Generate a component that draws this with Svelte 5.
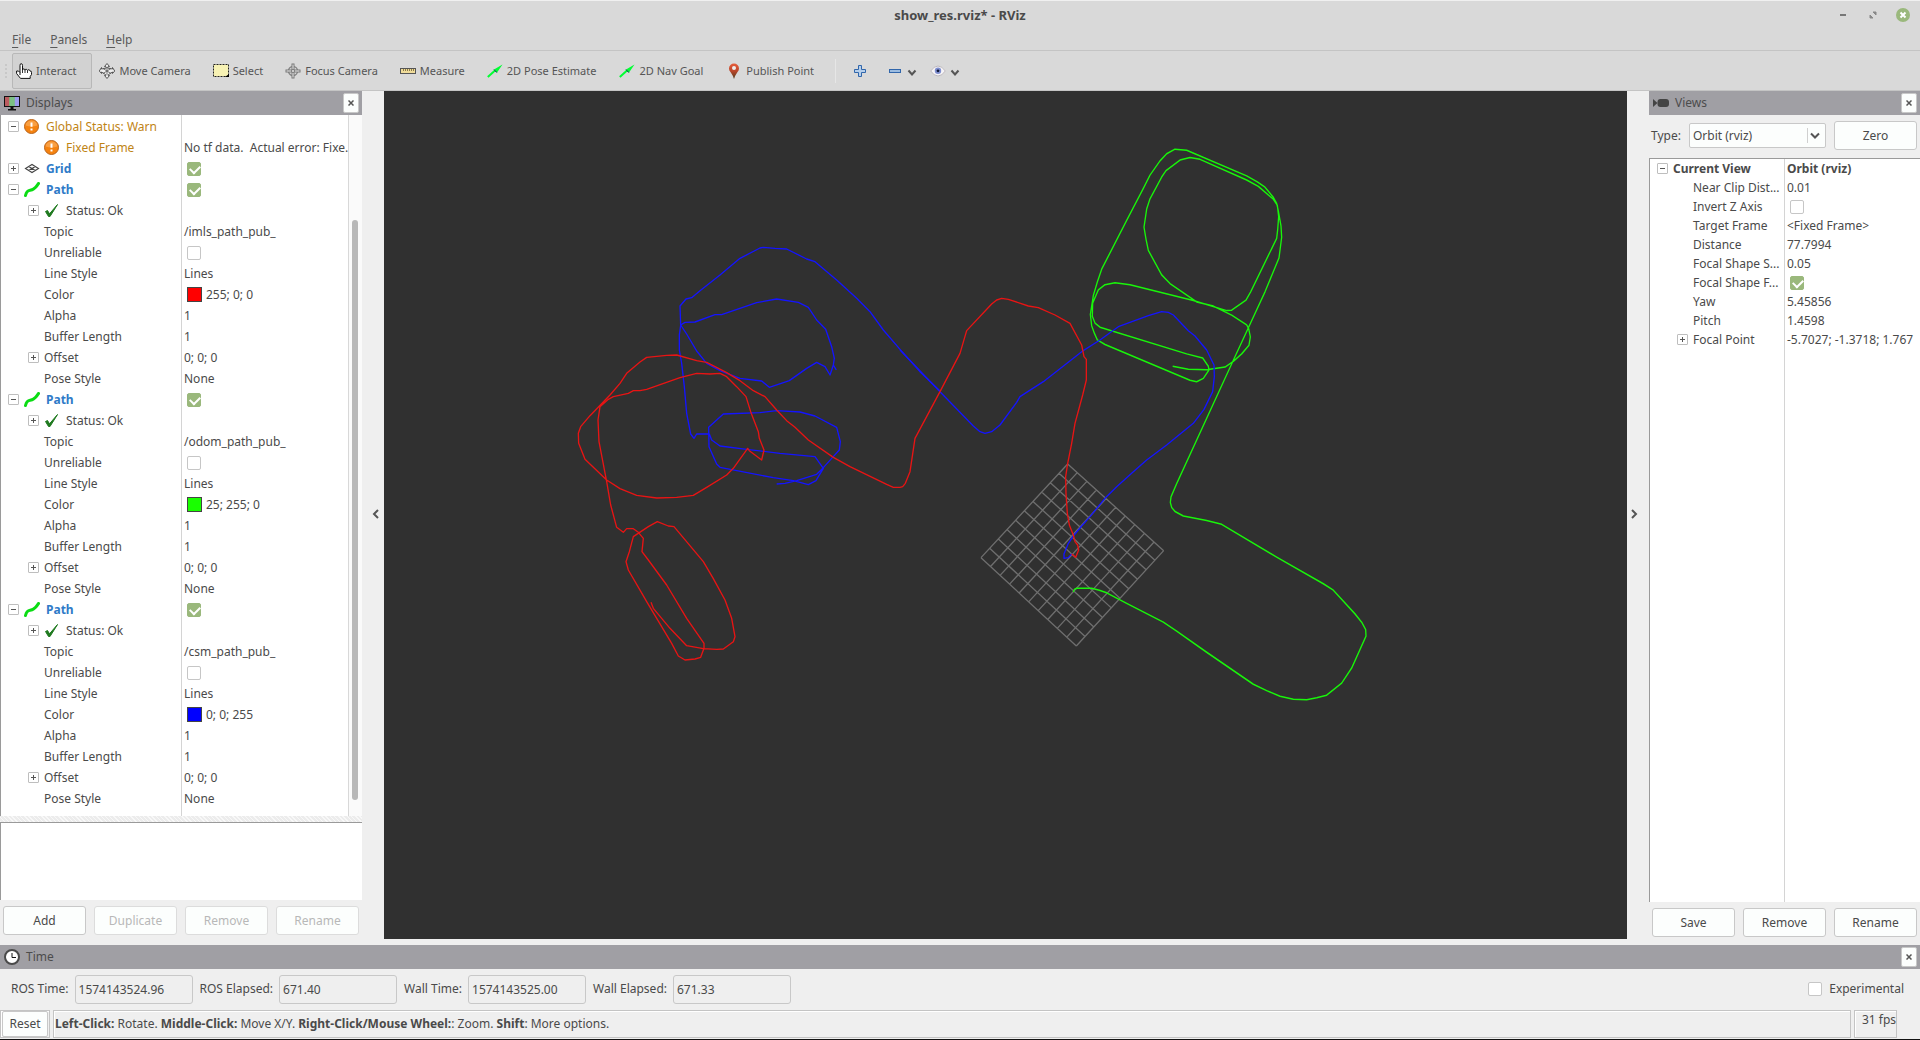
<script>
  const tools = [
    { id: 'interact', label: 'Interact', active: true },
    { id: 'move', label: 'Move Camera' },
    { id: 'select', label: 'Select' },
    { id: 'focus', label: 'Focus Camera' },
    { id: 'measure', label: 'Measure' },
    { id: 'arrow', label: '2D Pose Estimate' },
    { id: 'arrow', label: '2D Nav Goal' },
    { id: 'pin', label: 'Publish Point' },
  ];

  function pathRows(topic, color, colorText) {
    return [
      { name: 'Path', level: 0, toggle: '-', icon: 'path', tone: 'display', check: true },
      { name: 'Status: Ok', level: 1, toggle: '+', icon: 'ok' },
      { name: 'Topic', level: 1, value: topic },
      { name: 'Unreliable', level: 1, check: false },
      { name: 'Line Style', level: 1, value: 'Lines' },
      { name: 'Color', level: 1, value: colorText, swatch: color },
      { name: 'Alpha', level: 1, value: '1' },
      { name: 'Buffer Length', level: 1, value: '1' },
      { name: 'Offset', level: 1, toggle: '+', value: '0; 0; 0' },
      { name: 'Pose Style', level: 1, value: 'None' },
    ];
  }

  const displays = [
    { name: 'Global Status: Warn', level: 0, toggle: '-', icon: 'warn', tone: 'warning' },
    { name: 'Fixed Frame', level: 1, icon: 'warn', tone: 'warning', value: 'No tf data.  Actual error: Fixe.' },
    { name: 'Grid', level: 0, toggle: '+', icon: 'grid', tone: 'display', check: true },
    ...pathRows('/imls_path_pub_', '#ff0000', '255; 0; 0'),
    ...pathRows('/odom_path_pub_', '#19ff00', '25; 255; 0'),
    ...pathRows('/csm_path_pub_', '#0000ff', '0; 0; 255'),
  ];

  const views = [
    { name: 'Current View', level: 0, toggle: '-', tone: 'strong', value: 'Orbit (rviz)' },
    { name: 'Near Clip Dist...', level: 1, value: '0.01' },
    { name: 'Invert Z Axis', level: 1, check: false },
    { name: 'Target Frame', level: 1, value: '<Fixed Frame>' },
    { name: 'Distance', level: 1, value: '77.7994' },
    { name: 'Focal Shape S...', level: 1, value: '0.05' },
    { name: 'Focal Shape F...', level: 1, check: true },
    { name: 'Yaw', level: 1, value: '5.45856' },
    { name: 'Pitch', level: 1, value: '1.4598' },
    { name: 'Focal Point', level: 1, toggle: '+', value: '-5.7027; -1.3718; 1.767' },
  ];

  const clocks = [
    { id: 'ros-time', label: 'ROS Time:', value: '1574143524.96' },
    { id: 'ros-elapsed', label: 'ROS Elapsed:', value: '671.40' },
    { id: 'wall-time', label: 'Wall Time:', value: '1574143525.00' },
    { id: 'wall-elapsed', label: 'Wall Elapsed:', value: '671.33' },
  ];

  // Ground grid: ten by ten cells spread between four projected corners.
  const top = [2051, 1119], left = [1791, 1400], right = [2339, 1379], bottom = [2077, 1665];
  const mix = (a, b, t) => [a[0] + (b[0] - a[0]) * t, a[1] + (b[1] - a[1]) * t];
  const gridLines = [];
  for (let i = 0; i <= 10; i++) {
    gridLines.push([mix(top, right, i / 10), mix(left, bottom, i / 10)]);
    gridLines.push([mix(top, left, i / 10), mix(right, bottom, i / 10)]);
  }
  const gridPath = gridLines.map(([a, b]) => `M${a.join(' ')}L${b.join(' ')}`).join('');

  const traces = [
    { kind: 'green', place: 'translate(2028 117) scale(1 1.1288)', points: '40,1228 43,1221 50,1218 95,1218 118,1223 140,1230 200,1258 310,1308 350,1332 440,1388 580,1473 620,1490 660,1505 700,1513 740,1514 770,1509 800,1502 845,1470 875,1430 918,1345 917,1328 905,1308 885,1286 820,1223 790,1206 650,1135 485,1048 440,1038 370,1026 345,1014 335,1003 331,990 333,975 350,940 520,612 615,430 657,340 665,285 663,255 655,215 650,195 640,179 615,152 592,138 560,122 380,54 345,51 320,63 300,82 270,120 250,155 200,240 125,370 112,404 100,440 91,490 95,520 103,540 112,558 135,570 390,665 410,669 430,660 447,638 445,628 428,606 380,595 120,524 105,513 97,495 98,460 115,425 135,411 165,406 210,411 400,453 500,480 515,479 558,452 572,430 650,288 653,265 656,230 652,200 640,184 595,150 560,133 420,78 390,73 360,80 318,108 305,125 270,183 260,210 252,258 258,290 265,320 305,385 330,408 410,457 460,468 515,492 560,518 566,528 571,550 567,572 545,595 520,615 495,630 440,637 385,636 338,628' },
    { kind: 'blue', place: 'translate(1548 567)', points: '515,822 505,833 492,835 492,822 505,790 520,768 545,738 570,710 615,655 650,620 700,575 740,540 800,495 880,430 912,388 938,335 943,290 942,255 920,210 885,168 865,152 820,105 805,97 785,95 745,107 655,140 600,180 545,215 430,305 360,350 350,367 300,435 275,455 255,460 240,455 220,438 120,335 0,210' },
    { kind: 'blue', place: 'translate(528 417)', points: '1140,483 1080,425 1020,358 970,300 930,245 890,205 830,150 765,95 740,87 680,57 645,55 610,52 600,54 540,85 480,135 420,182 395,203 378,207 360,228 362,285 358,315 358,360 365,400 373,470 380,550 392,612 402,625 410,612 448,612 455,630 480,648 560,658 660,670 765,680 790,715 768,752 745,764 700,752 640,743 480,712 470,702 447,650 446,592 490,552 600,548 650,542 720,546 765,558 830,592 841,635 838,660 815,685 790,713 770,733 710,752 675,760 650,762' },
    { kind: 'blue', place: 'translate(528 417)', points: '362,285 375,277 405,276 465,254 485,254 590,218 650,207 715,217 745,232 770,270 797,298 815,350 823,385 820,405 828,418 820,405 810,435 795,410 770,397 740,415 688,452 628,472 605,453 540,445 480,422 440,400 410,363 380,312 362,285' },
    { kind: 'red', place: 'translate(1548 567)', points: '515,822 527,832 536,810 533,795 525,785 520,765 508,735 502,700 498,640 497,590 503,550 515,490 525,430 548,345 559,300 559,238 552,230 545,195 510,130 465,105 415,83 385,78 325,58 305,55 290,60 275,72 200,152 180,220 120,335 45,475 30,575 16,610 8,620 0,622' },
    { kind: 'red', place: 'translate(528 417)', points: '1020,772 1000,772 980,763 870,710 820,682 745,630 705,592 680,572 650,540 615,500 580,482 540,452 500,428 440,397 410,392 350,375 320,376 260,382 240,396 200,430 180,460 150,495 90,557 62,590 55,610 56,640 75,688 140,750 180,776 230,796 290,804 350,802 400,796 440,772 500,735 520,715 563,655 568,662 605,690 612,660 598,625 595,605 572,545 558,500 530,470 500,440 480,430 450,432 410,430 360,443 260,478 240,482 220,482 205,490 160,500 145,508 120,530 114,570 117,635 140,755 152,825 170,892 190,907 200,896 220,896 235,907 250,925 246,965 265,990 320,1065 380,1165 432,1240 432,1255 422,1282 405,1287 375,1290 355,1278 335,1240 260,1115 205,1020 198,995 208,965 220,920 238,908 265,890 292,875 325,888 342,890 430,995 460,1046 495,1110 515,1165 525,1220 520,1235 490,1257 470,1258 430,1256 380,1247 330,1195 280,1135 273,1117' },
  ];
</script>

{#snippet icon(id)}
  <svg class="icon" width="16" height="16" viewBox="0 0 16 16" aria-hidden="true">
    {#if id === 'interact'}
      <path d="M4 12V2.5Q4 .6 5.2.6T6.500 2.500V7Q6.700 5.700 7.800 5.900T9 7.200Q9.300 6 10.300 6.300T11.500 7.500Q12 6.500 13 6.800T14.200 8.200Q15.500 7.700 15.500 9.300V11.500L14.200 13.500V15.400H4.500L.6 10.500V8H2.500L4 9.500" fill="#fff" stroke="#111" stroke-width="1" />
      <path d="M6.500 7v3M9 7v3M11.500 7.500V10" stroke="#333" />
    {:else if id === 'move'}
      <path d="M8 .5l2.500 3H9.200L8.600 5 13.500 6V4.500L15.700 8l-2.200 2.500V9L9.500 11.500 9.200 12.500h1.300L8 15.500l-2.500-3h1.300L6.500 11.500 2.500 9v1.500L.3 8l2.200-3.500V6L7.400 5 6.800 3.500H5.500z" fill="#eee" stroke="#555" />
      <path d="M4 5.500l8 5M12 5.500l-8 5M8 4v8" stroke="#555" stroke-width=".8" />
    {:else if id === 'select'}
      <rect x="0.500" y="1.500" width="15" height="12" fill="#f7f2b4" stroke="#222" stroke-dasharray="2 1" />
      <path d="M16 14h-4l4-3z" fill="#000" />
    {:else if id === 'focus'}
      <circle cx="8" cy="8" r="4.500" fill="#ddd" stroke="#888" stroke-width="1.500" />
      <path d="M8 .5v15M.5 8h15" stroke="#777" stroke-width="3" />
      <path d="M8 1.500v13M1.500 8h13" stroke="#eee" />
      <circle cx="8" cy="8" r="1.500" fill="#eee" stroke="#777" />
    {:else if id === 'measure'}
      <rect x=".5" y="5.500" width="15" height="5" fill="#f0dc9a" stroke="#555" />
      <path d="M3.500 6v2M5.500 6v2M7.500 6v2M9.500 6v2M11.500 6v2M13.500 6v2" stroke="#8a7a48" />
    {:else if id === 'arrow'}
      <path d="M.8 14L8 7.500" stroke="#0f3" stroke-width="2" />
      <path d="M15.500 1.500L7 6.500 10 9.500z" fill="#0f3" />
      <path d="M7 6.500L10 9.500 8.200 8.200z" fill="#065" stroke="#064" stroke-width=".6" />
    {:else if id === 'pin'}
      <path d="M8 16Q7 12.500 4.500 9A5 5 0 1 1 11.500 9Q9 12.500 8 16z" fill="url(#pin-fill)" />
      <circle cx="8" cy="5" r="2" fill="#eee" />
    {:else if id === 'plus'}
      <path d="M6.500 2.500h3v4h4v3h-4v4h-3v-4h-4v-3h4z" fill="#b5cfec" stroke="#3166ab" />
    {:else if id === 'minus'}
      <rect x="2.500" y="6.500" width="11" height="3" fill="#9cbce0" stroke="#3166ab" />
    {:else if id === 'eye'}
      <path d="M.7 8Q4 3 8 3t7.300 5Q12 13 8 13T.7 8z" fill="#f6f4f6" stroke="#bdb8bd" />
      <circle cx="8" cy="7.800" r="3.200" fill="#7f8fd0" />
      <circle cx="8" cy="7.800" r="1.400" fill="#101838" />
    {:else if id === 'warn'}
      <circle cx="7.500" cy="7.500" r="7" fill="#f5820f" stroke="#b8641c" />
      <path d="M1.500 6.500a6 5 0 0 1 12 0Q7.500 8.500 1.500 6.500z" fill="#fbab58" opacity=".7" />
      <path d="M7.500 3.500v4.200M7.500 9.500v2" stroke="#fff" stroke-width="2" />
    {:else if id === 'grid'}
      <path d="M1.500 7.500L8 3.500 14.500 7.500 8 11.500zM4.700 5.500l6.600 4M11.300 5.500l-6.600 4" fill="none" stroke="#444" stroke-width="1.100" />
    {:else if id === 'path'}
      <path d="M1.500 13.500C3 6.500 6 9.500 9.500 7S12.500 4 14.500 1.500" fill="none" stroke="#0bdc14" stroke-width="3" stroke-linecap="round" />
    {:else if id === 'ok'}
      <path d="M1.500 8.500L3.500 7.500 5.500 10.800 13.500 1.500 6 13.500H4.500z" fill="#1f7a1f" stroke="#1f7a1f" />
    {:else if id === 'monitor'}
      <rect x=".5" y="1.500" width="15" height="10" fill="#69c26e" stroke="#111" />
      <path d="M1 2h4.500v9H1z" fill="#bb5c60" /><path d="M10.500 2H15v9h-4.500z" fill="#9d9cee" />
      <path d="M5.500 2H10.500v9h-5z" fill="#7cc184" />
      <path d="M6.500 12h3v2h2.500v1.500H4V14h2.500z" fill="#111" />
    {:else if id === 'camera'}
      <path d="M0 4l4.500 4L0 12z" fill="#444" />
      <rect x="4.500" y="4" width="11.500" height="8" rx="3" fill="#444" />
    {:else if id === 'clock'}
      <circle cx="8" cy="8" r="7" fill="#fff" stroke="#4a4a4a" stroke-width="2" />
      <path d="M8 4v4.500h4" fill="none" stroke="#111" />
    {/if}
  </svg>
{/snippet}

{#snippet chevron(d)}
  <svg class="chevron" width="10" height="10" viewBox="0 0 10 10" aria-hidden="true"><path {d} fill="none" stroke="#555" stroke-width="2" /></svg>
{/snippet}

{#snippet cross()}
  <svg width="6" height="6" viewBox="0 0 6 6" aria-hidden="true"><path d="M.5.5l5 5M5.500.5l-5 5" stroke="#555" stroke-width="1.500" /></svg>
{/snippet}

{#snippet tree(rows, label, kind)}
  <table class="tree {kind}" aria-label={label}>
    <colgroup><col class="names" /><col /></colgroup>
    <tbody>
      {#each rows as row}
        <tr class={row.tone}>
          <td>
            <div class="name level{row.level}">
              {#if row.toggle}
                <button class="toggle" class:plus={row.toggle === '+'} aria-label="Toggle {row.name}"></button>
              {:else}
                <span class="spacer"></span>
              {/if}
              {#if row.icon}{@render icon(row.icon)}{/if}
              <span>{row.name}</span>
            </div>
          </td>
          <td>
            <div class="value">
              {#if row.check !== undefined}
                <input type="checkbox" checked={row.check} aria-label={row.name} />
              {/if}
              {#if row.swatch}<span class="swatch" style:background={row.swatch}></span>{/if}
              {#if row.value}<span>{row.value}</span>{/if}
            </div>
          </td>
        </tr>
      {/each}
    </tbody>
  </table>
{/snippet}

<svg class="defs" width="0" height="0" aria-hidden="true">
  <linearGradient id="pin-fill" x1="0" y1="0" x2="0" y2="1">
    <stop offset="0" stop-color="#e85e3c" /><stop offset=".5" stop-color="#b8452a" /><stop offset="1" stop-color="#4d3c1c" />
  </linearGradient>
</svg>

<div class="window">
  <header class="titlebar">
    <h1>show_res.rviz* - RViz</h1>
    <div class="controls">
      <button aria-label="Minimize"><svg width="14" height="14" viewBox="0 0 14 14"><path d="M4 7h6" stroke="#777" stroke-width="2" /></svg></button>
      <button aria-label="Maximize"><svg width="14" height="14" viewBox="0 0 14 14"><path d="M7 4h3v3zM4 7v3h3z" fill="#888" stroke="#888" /></svg></button>
      <button aria-label="Close"><svg width="14" height="14" viewBox="0 0 14 14"><circle cx="7" cy="7" r="7" fill="#9ab87c" /><path d="M4.500 4.500l5 5M9.500 4.500l-5 5" stroke="#fff" stroke-width="2" /></svg></button>
    </div>
  </header>

  <nav class="menubar">
    <button><u>F</u>ile</button>
    <button><u>P</u>anels</button>
    <button><u>H</u>elp</button>
  </nav>

  <div class="toolbar">
    <span class="handle"></span>
    {#each tools as tool}
      <button class="tool {tool.id}" class:active={tool.active}>{@render icon(tool.id)}{tool.label}</button>
    {/each}
    <span class="separator"></span>
    <button class="mini" aria-label="Add tool">{@render icon('plus')}</button>
    <button class="mini" aria-label="Remove tool">{@render icon('minus')}{@render chevron('M1.500 4.500L5 8.500 8.500 4.500')}</button>
    <button class="mini" aria-label="Tool options">{@render icon('eye')}{@render chevron('M1.500 4.500L5 8.500 8.500 4.500')}</button>
  </div>

  <main>
    <section class="panel displays">
      <h2>{@render icon('monitor')}<span>Displays</span><button class="close" aria-label="Close Displays">{@render cross()}</button></h2>
      <div class="scroller">
        <div class="treebox displaybox">{@render tree(displays, 'Displays', 'tall')}</div>
        <div class="track"><div class="thumb"></div></div>
      </div>
      <div class="splitter"></div>
      <div class="help"></div>
      <div class="buttons">
        <button class="push">Add</button>
        <button class="push" disabled>Duplicate</button>
        <button class="push" disabled>Remove</button>
        <button class="push" disabled>Rename</button>
      </div>
    </section>

    <button class="fold fold-left" aria-label="Hide left panel">{@render chevron('M7 1L3 5L7 9')}</button>

    <div class="viewport">
      <svg class="scene" viewBox="0 0 3729 2544" role="img" aria-label="3D view">
        <path class="ground" d={gridPath} />
        {#each traces as trace}
          <polyline class="trace {trace.kind}" transform={trace.place} points={trace.points} />
        {/each}
      </svg>
    </div>

    <button class="fold fold-right" aria-label="Hide right panel">{@render chevron('M3 1L7 5L3 9')}</button>

    <section class="panel views">
      <h2>{@render icon('camera')}<span>Views</span><button class="close" aria-label="Close Views">{@render cross()}</button></h2>
      <div class="type">
        <label for="view-type">Type:</label>
        <div class="combo">
          <select id="view-type"><option>Orbit (rviz)</option></select>
          <svg width="10" height="8" viewBox="0 0 10 8" aria-hidden="true"><path d="M1 1.500l4 4 4-4" fill="none" stroke="#555" stroke-width="2" /></svg>
        </div>
        <button class="push">Zero</button>
      </div>
      <div class="treebox viewbox">{@render tree(views, 'Views', 'short')}</div>
      <div class="buttons">
        <button class="push">Save</button>
        <button class="push">Remove</button>
        <button class="push">Rename</button>
      </div>
    </section>
  </main>

  <section class="time">
    <h2>{@render icon('clock')}<span>Time</span><button class="close" aria-label="Close Time">{@render cross()}</button></h2>
    <div class="clocks">
      {#each clocks as clock}
        <label for={clock.id}>{clock.label}</label>
        <input id={clock.id} type="text" readonly value={clock.value} />
      {/each}
      <label class="experimental"><input type="checkbox" />Experimental</label>
    </div>
  </section>

  <footer>
    <div class="frame"><button class="reset">Reset</button></div>
    <p class="frame hint"><b>Left-Click:</b> Rotate. <b>Middle-Click:</b> Move X/Y. <b>Right-Click/Mouse Wheel:</b>: Zoom. <b>Shift</b>: More options.</p>
    <div class="frame fps">31 fps</div>
  </footer>
</div>

<style>
  :global(body) { margin: 0; }
  * { box-sizing: border-box; }
  .window {
    display: flex;
    flex-direction: column;
    min-height: 100vh;
    background: #efefef;
    color: #4a4a4a;
    font: 12px/18px "Noto Sans", sans-serif;
    border-bottom: 1px solid #111;
  }
  button, input, select { font: inherit; color: inherit; margin: 0; }
  button { border: 0; background: none; padding: 0; }
  h1, h2, p { margin: 0; font-size: inherit; }
  svg { display: block; flex: none; }
  .defs { position: absolute; }

  .titlebar {
    display: grid;
    grid-template-columns: 1fr auto 1fr;
    align-items: center;
    height: 28px;
    background: #d9d9d9;
    border-top: 1px solid #f0f0f0;
  }
  .titlebar h1 { grid-column: 2; font-size: 13px; font-weight: 700; }
  .controls { display: flex; justify-content: flex-end; align-items: center; gap: 16px; padding-right: 10px; }
  .menubar { display: flex; gap: 19px; padding: 2px 12px 0; height: 23px; background: #d9d9d9; border-bottom: 1px solid #c4c4c4; color: #5a5a5a; }
  .menubar u { text-underline-offset: 3px; }

  .toolbar {
    display: flex;
    align-items: center;
    gap: 2px;
    height: 40px;
    padding-left: 5px;
    background: #d9d9d9;
    border-bottom: 1px solid #c4c4c4;
    font-size: 11px;
    color: #555;
  }
  .handle { width: 5px; height: 14px; border-left: 2px dotted #c8c8c8; }
  .tool { display: flex; align-items: center; gap: 4px; height: 36px; padding: 0 15px 0 3px; border: 1px solid transparent; border-radius: 2px; }
  .tool.active { margin-right: 1px; background: #d2d2d2; border-color: #b8b8b8; }
  .tool.arrow { padding-right: 16px; }
  .separator { width: 1px; height: 24px; margin: 0 14px 0 3px; background: #e6e6e6; }
  .mini { display: flex; align-items: center; gap: 4px; margin-right: 8px; }
  .mini + .mini { margin-left: 9px; margin-right: 2px; }

  main { display: grid; grid-template-columns: 362px 22px 1fr 22px 271px; flex: 1; }
  .panel { display: flex; flex-direction: column; min-width: 0; }
  h2 {
    display: flex;
    align-items: center;
    gap: 6px;
    height: 24px;
    padding: 0 3px 0 4px;
    background: #a09fa4;
    color: #4c4c4c;
    font-weight: 400;
  }
  .close {
    display: flex;
    align-items: center;
    justify-content: center;
    width: 16px;
    height: 20px;
    margin-left: auto;
    background: #fcfefd;
    border: 1px solid #c8c8c8;
    border-radius: 2px;
  }
  .scroller { display: flex; flex: 1; border-left: 1px solid #9a9a9a; background: #fff; }
  .treebox { flex: 1; min-width: 0; background: #fff; }
  .displaybox { padding-top: 1px; background: linear-gradient(#d4d4d4, #d4d4d4) 180px 0 / 1px 100% no-repeat #fff; }
  .viewbox { border: solid #9a9a9a; border-width: 1px 0 0 1px; background: linear-gradient(#d4d4d4, #d4d4d4) 134px 0 / 1px 100% no-repeat #fff; }
  .track { width: 14px; padding: 105px 4px 16px 3px; border-left: 1px solid #d8d8d8; background: #fafafa; }
  .thumb { height: 100%; border-radius: 3px; background: #b8b8b8; }

  .tree { width: 100%; table-layout: fixed; border-collapse: collapse; }
  .tall .names { width: 180px; }
  .short .names { width: 134px; }
  td { padding: 0; }
  .name, .value { display: flex; align-items: center; white-space: pre; }
  .tall .name, .tall .value { height: 21px; }
  .short .name, .short .value { height: 19px; }
  .name { padding-left: 7px; }
  .name.level1 { padding-left: 27px; }
  .name .icon { margin-right: 6px; }
  .toggle, .spacer { flex: none; width: 11px; height: 11px; margin-right: 5px; }
  .toggle {
    border: 1px solid #bebebe;
    border-radius: 1px;
    background: linear-gradient(#555, #555) center / 5px 1px no-repeat #fff;
  }
  .toggle.plus { background: linear-gradient(#555, #555) center / 5px 1px no-repeat, linear-gradient(#555, #555) center / 1px 5px no-repeat #fff; }
  .value { padding-left: 3px; gap: 4px; }
  .swatch { width: 15px; height: 15px; margin-left: 3px; border: 1px solid #444; }
  .warning .name { color: #bf8415; }
  .display .name { color: #2f7bc8; font-weight: 700; }
  .strong { font-weight: 700; }

  input[type='checkbox'] {
    appearance: none;
    display: grid;
    flex: none;
    width: 14px;
    height: 14px;
    background: #fff;
    border: 1px solid #c6c6c6;
    border-radius: 2px;
  }
  td input[type='checkbox'] { margin-left: 3px; }
  input[type='checkbox']:checked { background: #9ab87c; border-color: #9ab87c; }
  input[type='checkbox']:checked::after {
    content: '';
    width: 8px;
    height: 5px;
    margin: 2px;
    border: solid #fff;
    border-width: 0 0 2px 2px;
    transform: rotate(-45deg);
  }

  .splitter { height: 6px; background: repeating-linear-gradient(45deg, #f8f8f8 0 1px, #ececec 1px 3px); }
  .help { height: 78px; background: #fff; border: solid #9a9a9a; border-width: 1px 0 0 1px; }
  .buttons { display: grid; grid-auto-flow: column; grid-auto-columns: 1fr; gap: 8px; padding: 6px 3px 10px; }
  .views .buttons { padding-bottom: 8px; }
  .push { height: 29px; background: #fcfefd; border: 1px solid #c8c8c8; border-radius: 3px; }
  .push:disabled { color: #b8b8b8; border-color: #dcdcdc; }
  .fold { display: flex; align-items: center; justify-content: center; padding-bottom: 8px; }
  .fold-left { padding-left: 6px; }
  .fold-right { padding-right: 8px; }
  .viewport { contain: size; margin-bottom: 6px; background: #303030; }
  .scene { width: 100%; height: 100%; }
  .ground, .trace { fill: none; stroke-width: 4; }
  .ground { stroke: #6e6e6e; }
  .trace { stroke-linejoin: round; }
  .red { stroke: #e81414; }
  .green { stroke: #19f50a; }
  .blue { stroke: #1414ff; }

  .type { display: flex; align-items: center; gap: 8px; padding: 6px 3px 8px 2px; }
  .combo { position: relative; flex: 1; }
  .combo select {
    appearance: none;
    display: block;
    width: 100%;
    height: 25px;
    padding: 0 3px;
    border: 1px solid #c8c8c8;
    border-radius: 2px;
    background: linear-gradient(#d0d0d0, #d0d0d0) right 17px center / 1px 15px no-repeat #fcfefd;
  }
  .combo svg { position: absolute; right: 6px; top: 9px; pointer-events: none; }
  .type .push { width: 83px; }

  .clocks { display: flex; align-items: center; gap: 6px; height: 40px; padding: 0 16px 0 11px; }
  .clocks input[type='text'] { width: 118px; height: 29px; margin-right: 1px; padding: 0 3px; background: #efefef; border: 1px solid #c8c8c8; border-radius: 3px; }
  .experimental { display: flex; align-items: center; gap: 7px; margin-left: auto; }
  footer { display: flex; gap: 3px; height: 30px; padding: 1px 23px 1px 0; }
  .frame { border: 1px solid #c4c4c4; box-shadow: inset 1px 1px #fff; }
  .reset { width: 46px; height: 26px; margin: 0 1px; background: #fcfefd; border: 1px solid #c8c8c8; border-radius: 2px; }
  .hint { flex: 1; padding: 4px 1px; }
  .fps { width: 43px; padding-left: 7px; line-height: 17px; white-space: nowrap; }
</style>
